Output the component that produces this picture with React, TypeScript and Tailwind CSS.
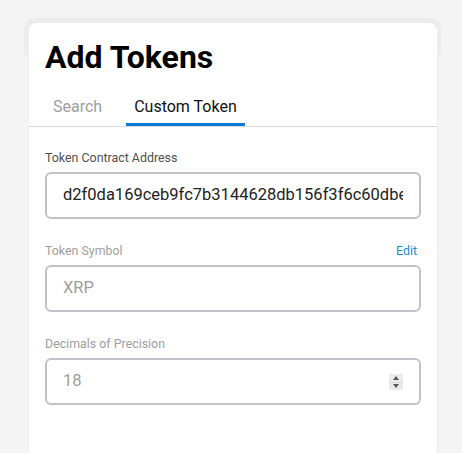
import React from "react";

const font = { fontFamily: 'Roboto, "Liberation Sans", Arial, sans-serif' };

function Spinner() {
  return (
    <div className="flex h-[16px] w-[14px] flex-col bg-[#ebebeb]">
      <div className="flex h-[8px] items-center justify-center">
        <svg width="6" height="4" viewBox="0 0 6 4">
          <path d="M3 0 L6 4 L0 4 Z" fill="#555" />
        </svg>
      </div>
      <div className="flex h-[8px] items-center justify-center border-t border-[#d9d9d9]">
        <svg width="6" height="4" viewBox="0 0 6 4">
          <path d="M0 0 L6 0 L3 4 Z" fill="#555" />
        </svg>
      </div>
    </div>
  );
}

type FieldProps = {
  label: string;
  value: string;
  muted?: boolean;
  action?: string;
  spinner?: boolean;
};

function Field({ label, value, muted, action, spinner }: FieldProps) {
  return (
    <div className="flex flex-col">
      <div className="mb-[6px] flex h-4 items-center justify-between text-[12.4px] leading-4">
        <span className={muted ? "text-[#9e9e9e]" : "text-[#4f4f4f]"}>{label}</span>
        {action && <span className="pr-1 text-[#1a8ce0]">{action}</span>}
      </div>
      <div className="flex h-[47px] items-center rounded-[6px] border-2 border-[#bfc3c7] bg-white px-4">
        <div className="w-0 min-w-0 flex-1 overflow-hidden">
          <input
            readOnly
            value={value}
            style={font}
            className={
              "w-full bg-transparent text-[16.5px] outline-none " +
              (muted ? "text-[#9e9e9e]" : "text-[#222]")
            }
          />
        </div>
        {spinner && <Spinner />}
      </div>
    </div>
  );
}

export default function App() {
  return (
    <div className="min-h-screen bg-[#f4f4f4] pl-[24px] pr-[21px] pt-[18px]" style={font}>
      <div className="rounded-t-[10px] bg-[linear-gradient(#ececec_0_37px,transparent_37px)] pl-[5px] pr-[4px] pt-[5px]">
        <div className="h-[430px] rounded-t-[8px] bg-white shadow-[-1px_0_0_#efefef,1px_0_0_#efefef]">
          <div className="px-4 pt-[14px]">
            <h1 className="text-[32px] font-bold leading-[40px] text-black">Add Tokens</h1>
          </div>

          {/* Tabs */}
          <div className="mt-[10px] flex gap-4 border-b border-[#d6dadf] px-4">
            <button className="border-b-[3px] border-transparent px-2 pb-1 pt-2 text-[16px] leading-6 text-[#9e9e9e]">
              Search
            </button>
            <button className="border-b-[3px] border-[#0a7bd4] px-2 pb-1 pt-2 text-[16px] leading-6 text-[#111]">
              Custom Token
            </button>
          </div>

          {/* Form */}
          <div className="flex flex-col gap-6 px-4 pt-[23px]">
            <Field label="Token Contract Address" value="d2f0da169ceb9fc7b3144628db156f3f6c60dbe5a2" />
            <Field label="Token Symbol" value="XRP" muted action="Edit" />
            <Field label="Decimals of Precision" value="18" muted spinner />
          </div>
        </div>
      </div>
    </div>
  );
}
